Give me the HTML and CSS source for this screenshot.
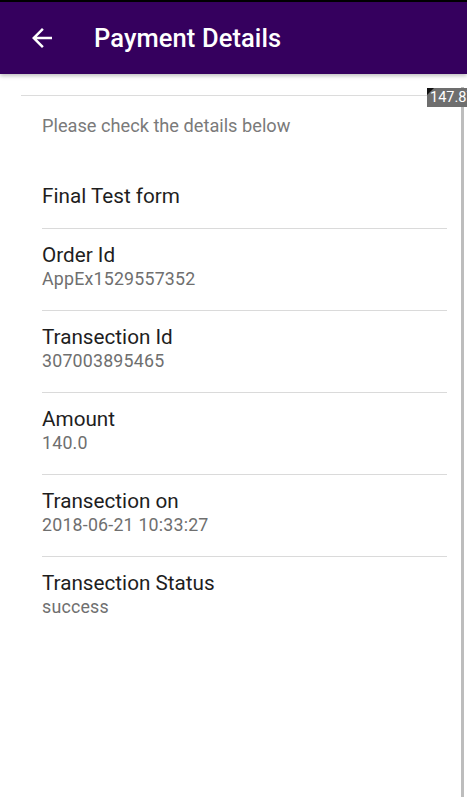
FILE: index.html
```html
<!DOCTYPE html>
<html lang="en">

<head>
    <meta charset="UTF-8">
    <meta name="viewport" content="width=device-width, initial-scale=1.0">
    <title>Payment Details</title>
    <link rel="stylesheet" href="styles.css">
</head>

<body>
    <!-- 顶部标题栏 -->
    <div class="app-bar">
        <svg class="back" width="30" height="30" viewBox="0 0 24 24">
            <path d="M20 11H7.83l5.59-5.59L12 4l-8 8 8 8 1.41-1.41L7.83 13H20v-2z" fill="#fff" />
        </svg>
        <h1 class="title">Payment Details</h1>
    </div>

    <div class="content">
        <div class="top-rule"></div>
        <p class="hint">Please check the details below</p>

        <ul class="details">
            <li class="row first">
                <span class="label">Final Test form</span>
            </li>
            <li class="row">
                <span class="label">Order Id</span>
                <span class="value">AppEx1529557352</span>
            </li>
            <li class="row">
                <span class="label">Transection Id</span>
                <span class="value">307003895465</span>
            </li>
            <li class="row">
                <span class="label">Amount</span>
                <span class="value">140.0</span>
            </li>
            <li class="row">
                <span class="label">Transection on</span>
                <span class="value">2018-06-21 10:33:27</span>
            </li>
            <li class="row last">
                <span class="label">Transection Status</span>
                <span class="value">success</span>
            </li>
        </ul>

        <!-- 滚动条和调试标签 -->
        <div class="scrollbar"></div>
        <div class="debug-tag">147.87</div>
    </div>
</body>

</html>
```

FILE: styles.css
```css
* {
    padding: 0;
    margin: 0;
    box-sizing: border-box;
}

body {
    width: 467px;
    height: 800px;
    overflow: hidden;
    background-color: #fff;
    font-family: Roboto, "Noto Sans", sans-serif;
}

.app-bar {
    height: 74px;
    border-top: 2px solid #000;
    background-color: #35005e;
    display: flex;
    align-items: center;
    padding-left: 27px;
    box-shadow: 0 2px 4px rgba(0, 0, 0, 0.25);
    position: relative;
    z-index: 1;
}

.back {
    display: block;
}

.title {
    margin-left: 37px;
    color: #fff;
    font-size: 25.5px;
    font-weight: 500;
    letter-spacing: 0.1px;
}

.content {
    position: relative;
    height: 726px;
    padding-top: 21px;
}

.top-rule {
    margin: 0 15px 0 21px;
    height: 1px;
    background-color: #dcdcdc;
}

.hint {
    margin: 19px 0 0 42px;
    line-height: 22px;
    font-size: 18.2px;
    color: #7a7a7a;
}

.details {
    list-style: none;
    margin: 0 20px 0 42px;
}

.row {
    display: flex;
    flex-direction: column;
    padding: 14px 0 19px;
    border-bottom: 1px solid #dadada;
}

.row.first {
    padding-top: 47px;
    padding-bottom: 20px;
}

.row.last {
    border-bottom: none;
}

.label {
    line-height: 24px;
    font-size: 20.7px;
    color: #1e1e1e;
}

.value {
    line-height: 24px;
    font-size: 17.8px;
    color: #6f6f6f;
    letter-spacing: 0.2px;
}

.scrollbar {
    position: absolute;
    top: 13px;
    right: 3px;
    width: 3px;
    height: 710px;
    background-color: #bdbdbd;
}

.debug-tag {
    position: absolute;
    top: 14px;
    left: 427px;
    width: 45px;
    height: 19px;
    padding-left: 3px;
    background-color: #6e6e6e;
    color: #fff;
    font-size: 14.5px;
    line-height: 19px;
    white-space: nowrap;
    overflow: hidden;
}

.debug-tag::before {
    content: "";
    position: absolute;
    top: 0;
    left: 0;
    border-top: 7px solid #111;
    border-right: 7px solid transparent;
}
```
